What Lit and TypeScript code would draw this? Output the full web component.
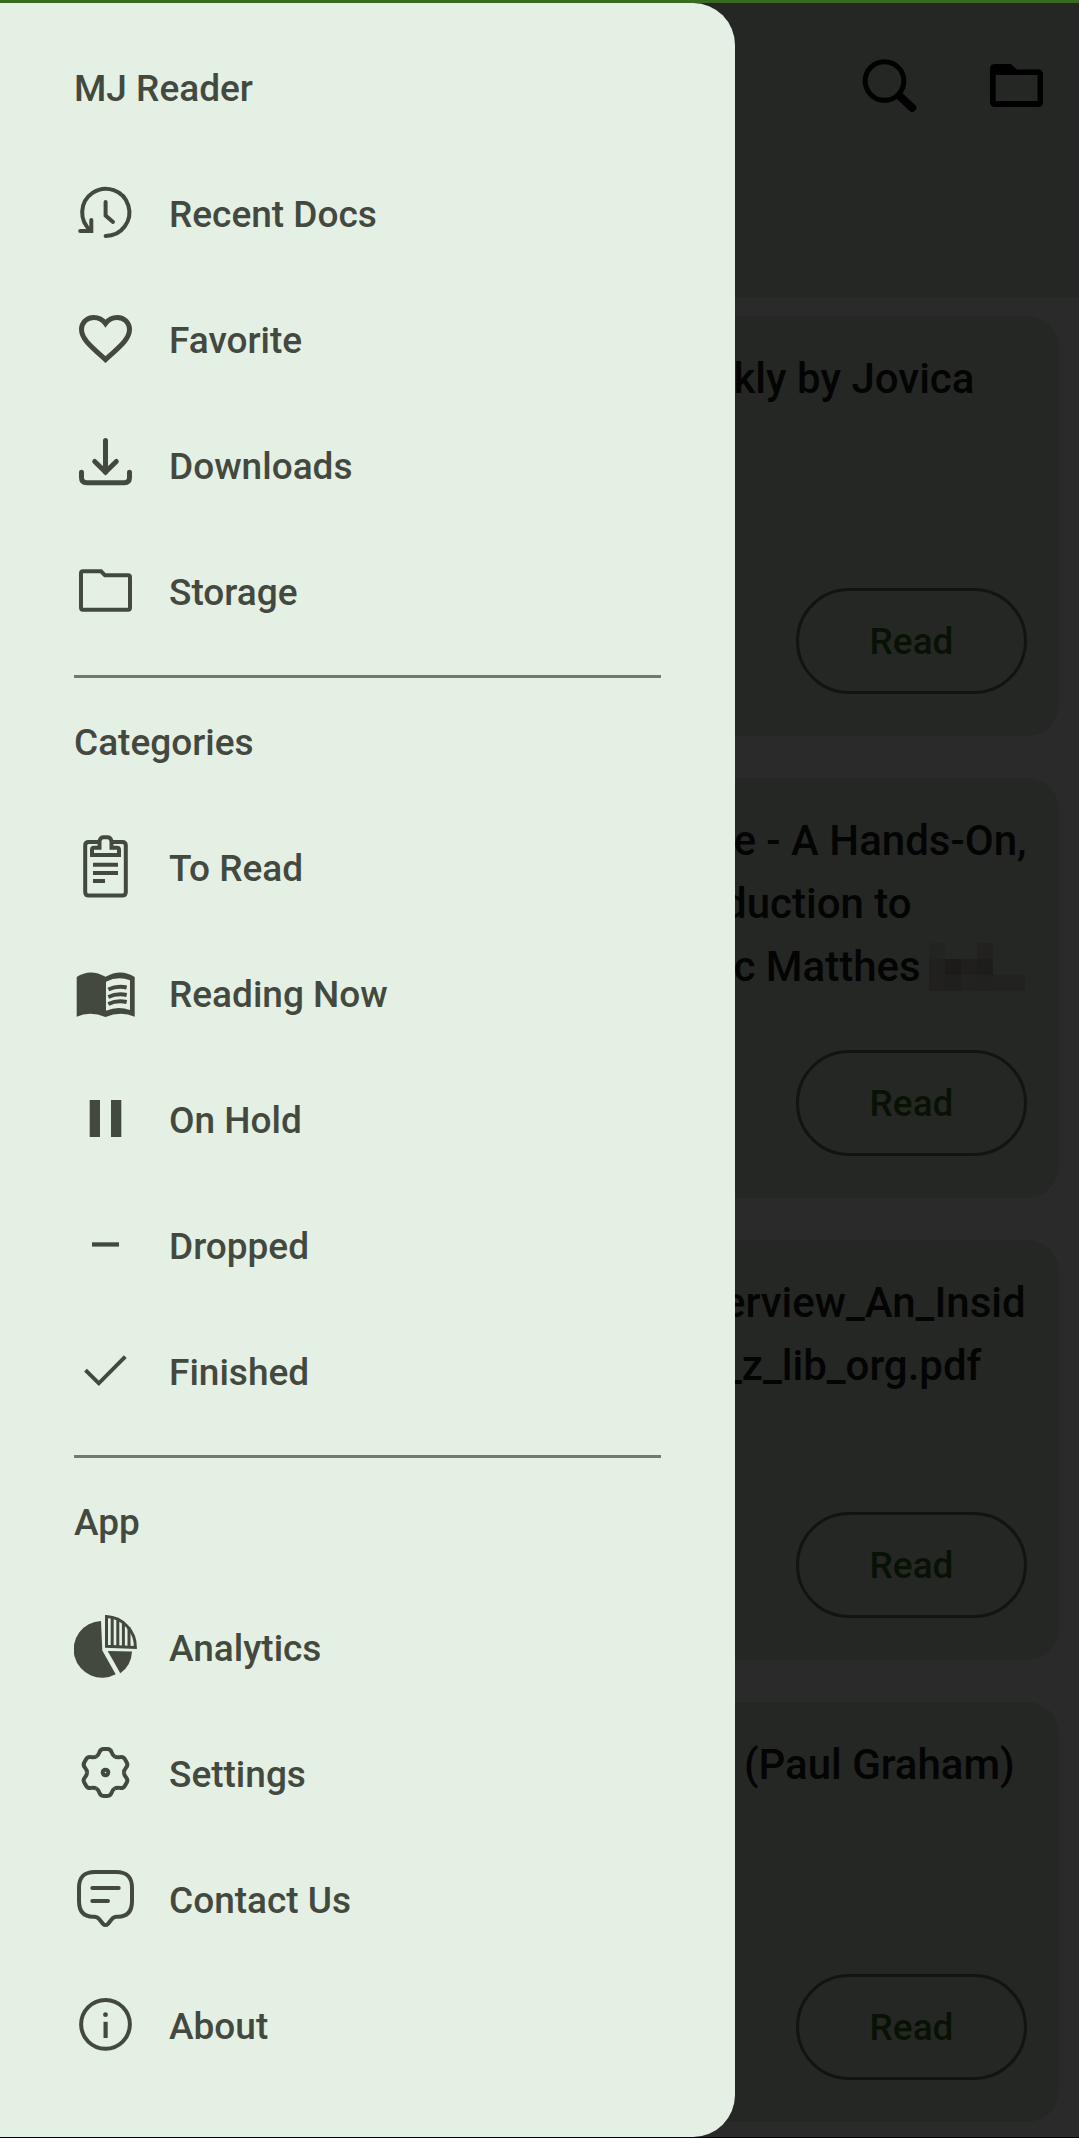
import { LitElement, html, svg, css, nothing } from "lit";
import type { SVGTemplateResult } from "lit";
import { customElement, property } from "lit/decorators.js";

/* Every glyph is drawn on a 64 x 64 grid. */
const glyphs: Record<string, SVGTemplateResult> = {
  recent: svg`
    <g class="line" stroke-linecap="round">
      <path d="M31.6 56 A23.6 23.6 0 1 0 17 50.8"/>
      <path d="M6.2 51 H17.3 V40" stroke-linejoin="miter"/>
      <path d="M31.6 22 V35.5 L39 42"/>
    </g>`,
  heart: svg`
    <path class="line" stroke-width="5" d="M31.5 17.5 C28.5 13.5 24.5 11.5 19.8 11.5 C12.5 11.5 7.5 16.8 7.5 23.6 C7.5 33 17 40.5 31.5 53.6 C46 40.5 55.5 33 55.5 23.6 C55.5 16.8 50.5 11.5 43.2 11.5 C38.5 11.5 34.5 13.5 31.5 17.5 Z"/>`,
  download: svg`
    <g class="line" stroke-width="5" stroke-linecap="round">
      <path d="M31.5 8.5 V40"/>
      <path d="M20.7 29.5 L31.5 40 L42.3 29.5"/>
      <path d="M7.5 40.2 V45.5 Q7.5 50.8 12.8 50.8 H50.2 Q55.5 50.8 55.5 45.5 V40.2"/>
    </g>`,
  folder: svg`
    <path class="line" d="M9 13.3 H27 L31 17.3 H54 Q56 17.3 56 19.3 V49.7 Q56 51.7 54 51.7 H9 Q7 51.7 7 49.7 V15.3 Q7 13.3 9 13.3 Z"/>`,
  clipboard: svg`
    <g class="line">
      <path d="M25.5 8 H14.7 Q11.2 8 11.2 11.5 V58 Q11.2 61.5 14.7 61.5 H48.3 Q51.8 61.5 51.8 58 V11.5 Q51.8 8 48.3 8 H37.5"/>
      <path d="M18 21 V15.7 Q18 13.7 20 13.7 H25.5 V7 Q26.5 3.3 29.5 3.3 H33.5 Q36.5 3.3 37.5 7 V13.7 H43 Q45 13.7 45 15.7 V21 Z"/>
      <path d="M19 30.7 H44 M19 39 H44 M19 47 H31"/>
    </g>`,
  book: svg`
    <path class="fill" fill-rule="evenodd" d="M2.7 17 Q16 8 31.5 16.7 Q47 8 60.7 17 V56.7 Q47 50.5 31.5 57 Q16 50.5 2.7 56.7 Z M32 21.7 V50.7 Q44 45.5 56 50 V20.3 Q44 15.5 32 21.7 Z"/>
    <path class="line" d="M34.3 29.5 Q43 25.5 52.7 27.5 M34.3 37 Q43 33 52.7 35 M34.3 44 Q43 40 52.7 42"/>`,
  pause: svg`<path class="fill" d="M15.7 14 H26 V51 H15.7 Z M37 14 H47.3 V51 H37 Z"/>`,
  minus: svg`<path class="fill" d="M18 30.3 H45 V34.6 H18 Z"/>`,
  check: svg`<path class="line" d="M11.5 32.2 L24.8 45.3 L51.3 18.7"/>`,
  pie: svg`
    <path class="fill" d="M27 7 L28.3 36.5 L41.7 60.3 A28.4 28.4 0 1 1 27 7 Z"/>
    <path class="fill" d="M33.7 37 L58 37.4 A28.4 28.4 0 0 1 46.3 59.3 Z"/>
    <path class="line" stroke-width="3" d="M32.5 2.6 V32.3 L61.4 33.5 A30.5 30.5 0 0 0 32.5 2.6 Z"/>
    <path class="line" stroke-width="3" d="M38.2 3 V33 M43.8 5 V33 M49.4 8 V33 M55 13 V33"/>`,
  gear: svg`
    <g class="line">
      ${[0, 60, 120, 180, 240, 300].map(
        (turn) => svg`<path transform="rotate(${turn} 31.5 32.5)" d="M22.2 16.5 C26.8 14.3 24 9.1 29.5 9.1 H33.5 C39 9.1 36.2 14.3 40.8 16.5"/>`,
      )}
      <circle cx="31.5" cy="32.5" r="2.8"/>
    </g>`,
  chat: svg`
    <g class="line" stroke-linecap="round">
      <path d="M21 6 H42 C53 6 58 11 58 22 V35 C58 46 53 50.7 44 50.7 H42.5 C40 50.7 39 51.5 37.5 53.5 L34 57.8 Q31.5 60.4 29 57.8 L25.5 53.5 C24 51.5 23 50.7 20.5 50.7 H19 C10 50.7 5 46 5 35 V22 C5 11 10 6 21 6 Z"/>
      <path d="M18.3 22 H44.7 M18.3 35 H34"/>
    </g>`,
  info: svg`
    <circle class="line" cx="31.5" cy="32.3" r="24.4"/>
    <circle class="fill" cx="31.5" cy="22.7" r="2.4"/>
    <path class="fill" d="M29.5 29.8 H33.7 V46 H29.5 Z"/>`,
  search: svg`
    <circle class="line" stroke-width="5" cx="26.5" cy="27" r="19.3"/>
    <path class="line" stroke-width="8" stroke-linecap="round" d="M42 42.5 L54.2 53.8"/>`,
  folderBold: svg`
    <path class="fill" fill-rule="evenodd" d="M11 10 H27 L33 15.5 H54 Q59 15.5 59 20.5 V48 Q59 53 54 53 H11 Q6 53 6 48 V15 Q6 10 11 10 Z M11.7 21 V47 H53.5 V21 Z"/>`,
};

@customElement("mj-icon")
class MjIcon extends LitElement {
  @property() name = "";

  static styles = css`
    :host {
      display: block;
      flex: none;
    }
    .glyph {
      display: block;
      width: 64px;
      height: 64px;
    }
    .line {
      fill: none;
      stroke: currentColor;
    }
    .fill {
      fill: currentColor;
    }
  `;

  render() {
    return html`<svg class="glyph" viewBox="0 0 64 64" stroke-width="4" aria-hidden="true">
      ${glyphs[this.name]}
    </svg>`;
  }
}

interface Section {
  title: string;
  items: [icon: string, label: string][];
}

const sections: Section[] = [
  {
    title: "MJ Reader",
    items: [
      ["recent", "Recent Docs"],
      ["heart", "Favorite"],
      ["download", "Downloads"],
      ["folder", "Storage"],
    ],
  },
  {
    title: "Categories",
    items: [
      ["clipboard", "To Read"],
      ["book", "Reading Now"],
      ["pause", "On Hold"],
      ["minus", "Dropped"],
      ["check", "Finished"],
    ],
  },
  {
    title: "App",
    items: [
      ["pie", "Analytics"],
      ["gear", "Settings"],
      ["chat", "Contact Us"],
      ["info", "About"],
    ],
  },
];

@customElement("nav-drawer")
class NavDrawer extends LitElement {
  static styles = css`
    :host {
      display: block;
      box-sizing: border-box;
      padding: 22px 74px 48px;
      background: #e5f0e4;
      color: #43493e;
      border-radius: 0 42px 42px 0;
      font-size: 37px;
      font-weight: 500;
    }
    .title,
    .item {
      display: flex;
      align-items: center;
      height: 126px;
      margin: 0;
      font-size: inherit;
      font-weight: inherit;
      color: inherit;
      text-decoration: none;
    }
    .item {
      gap: 31px;
    }
    .icon {
      margin-bottom: 4px;
    }
    .list {
      list-style: none;
      margin: 0;
      padding: 0;
    }
    .divider {
      height: 3px;
      margin: 20px 0 1px;
      border: 0;
      background: #73796d;
    }
  `;

  render() {
    return html`<nav>
      ${sections.map(
        (section, index) => html`
          ${index ? html`<hr class="divider" />` : nothing}
          <h2 class="title">${section.title}</h2>
          <ul class="list">
            ${section.items.map(
              ([icon, label]) => html`<li>
                <a class="item" href="#"><mj-icon class="icon" name=${icon}></mj-icon>${label}</a>
              </li>`,
            )}
          </ul>
        `,
      )}
    </nav>`;
  }
}

interface Book {
  lines: string[];
  masked?: boolean;
}

const books: Book[] = [
  { lines: [" kly by Jovica"] },
  { lines: [" e - A Hands-On,", "duction to", " c Matthes"], masked: true },
  { lines: ["erview_An_Insid", "_z_lib_org.pdf"] },
  { lines: ["  (Paul Graham)"] },
];

/* Tiles of the pixelated patch: column, row, colour. */
const tiles: [number, number, string][] = [
  [0, 0, "#222422"],
  [3, 0, "#232120"],
  [0, 1, "#20211f"],
  [1, 1, "#1d1b1a"],
  [2, 1, "#211f1e"],
  [3, 1, "#1d1e1b"],
  [0, 2, "#21201e"],
  [1, 2, "#1f201e"],
  [2, 2, "#222321"],
  [3, 2, "#212220"],
  [4, 2, "#222321"],
  [5, 2, "#222321"],
];

@customElement("book-card")
class BookCard extends LitElement {
  @property({ attribute: false }) book!: Book;

  static styles = css`
    :host {
      display: flex;
      justify-content: flex-end;
      box-sizing: border-box;
      height: 420px;
      padding: 31px 32px 42px;
      border-radius: 32px;
      background: #252724;
    }
    .body {
      display: flex;
      flex-direction: column;
      justify-content: space-between;
      width: 304px;
    }
    .title {
      margin: 0;
      color: #040404;
      font-size: 42px;
      font-weight: 500;
      line-height: 63px;
    }
    .row {
      display: flex;
      align-items: center;
      gap: 8px;
      white-space: pre;
    }
    .patch {
      flex: none;
      width: 96px;
      height: 48px;
    }
    .read {
      align-self: flex-end;
      box-sizing: border-box;
      width: 231px;
      height: 106px;
      border: 3px solid #131412;
      border-radius: 53px;
      background: none;
      color: #081204;
      font: inherit;
      font-size: 37px;
      font-weight: 500;
    }
  `;

  render() {
    const { lines, masked } = this.book;
    return html`<div class="body">
      <h3 class="title">
        ${lines.map(
          (line, i) => html`<span class="row"
            ><span>${line}</span>${masked && i === lines.length - 1
              ? html`<svg class="patch" viewBox="0 0 96 48" shape-rendering="crispEdges" aria-hidden="true">
                  ${tiles.map(
                    ([x, y, fill]) =>
                      svg`<rect x=${x * 16} y=${y * 16} width="16" height="16" fill=${fill} />`,
                  )}
                </svg>`
              : nothing}</span
          >`,
        )}
      </h3>
      <button class="read" type="button">Read</button>
    </div>`;
  }
}

@customElement("app-root")
class AppRoot extends LitElement {
  static styles = css`
    :host {
      display: block;
      border-top: 3px solid #386a20;
      border-bottom: 1px solid #000000;
      font-family: Roboto, "Noto Sans", sans-serif;
      overflow: hidden;
    }
    .stage {
      display: grid;
      background: #2a2a2a;
    }
    .page,
    .drawer {
      grid-area: 1 / 1;
      min-width: 0;
    }
    .drawer {
      width: 70%;
      max-width: 735px;
      z-index: 1;
    }
    .bar {
      display: flex;
      justify-content: flex-end;
      align-items: flex-start;
      box-sizing: border-box;
      height: 294px;
      padding-top: 20px;
      background: #252724;
    }
    .action {
      display: grid;
      place-items: center;
      width: 126px;
      height: 126px;
      padding: 0;
      border: 0;
      background: none;
      color: #000000;
    }
    .shelf {
      display: grid;
      gap: 42px;
      padding: 19px 20px 15px;
    }
  `;

  render() {
    return html`<div class="stage">
      <main class="page">
        <header class="bar">
          <button class="action" type="button" aria-label="Search"><mj-icon name="search"></mj-icon></button>
          <button class="action" type="button" aria-label="Folder"><mj-icon name="folderBold"></mj-icon></button>
        </header>
        <section class="shelf">${books.map((book) => html`<book-card .book=${book}></book-card>`)}</section>
      </main>
      <nav-drawer class="drawer"></nav-drawer>
    </div>`;
  }
}
